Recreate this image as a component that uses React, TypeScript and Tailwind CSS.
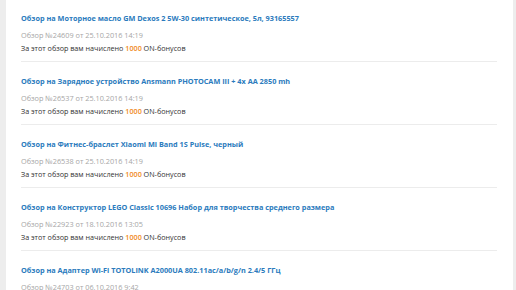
import React from 'react';

interface Review {
  id: number;
  title: string;
  date: string;
}

const reviews: Review[] = [
  { id: 24609, title: 'Моторное масло GM Dexos 2 5W-30 синтетическое, 5л, 93165557', date: '25.10.2016 14:19' },
  { id: 26537, title: 'Зарядное устройство Ansmann PHOTOCAM III + 4x AA 2850 mh', date: '25.10.2016 14:19' },
  { id: 26538, title: 'Фитнес-браслет Xiaomi Mi Band 1S Pulse, черный', date: '25.10.2016 14:19' },
  { id: 22923, title: 'Конструктор LEGO Classic 10696 Набор для творчества среднего размера', date: '18.10.2016 13:05' },
  { id: 24703, title: 'Адаптер Wi-Fi TOTOLINK A2000UA 802.11ac/a/b/g/n 2.4/5 ГГц', date: '06.10.2016 9:42' },
];

export default function App() {
  return (
    <div className="w-[516px] h-[290px] overflow-hidden bg-[#ededed] flex font-['Open_Sans',sans-serif]">
      <div className="w-[6px] shrink-0" />
      <div className="flex-1 bg-white pl-[15px] pr-[16px] pt-[12px]">
        {reviews.map((r) => (
          <div key={r.id} className="border-b border-[#ececec] pb-[7px] mb-[13px]">
            <a className="block text-[7.3px] font-bold text-[#2b7bbd] leading-[12px]">
              Обзор на {r.title}
            </a>
            <div className="mt-[5px] text-[7.3px] text-[#a6a6a6] leading-[12px]">
              Обзор №{r.id} от {r.date}
            </div>
            <div className="mt-[1px] text-[7.2px] text-[#333] leading-[12px]">
              За этот обзор вам начислено <span className="text-[#f08a24] font-semibold">1000</span> ON-бонусов
            </div>
          </div>
        ))}
      </div>
      <div className="w-[3px] shrink-0" />
    </div>
  );
}
